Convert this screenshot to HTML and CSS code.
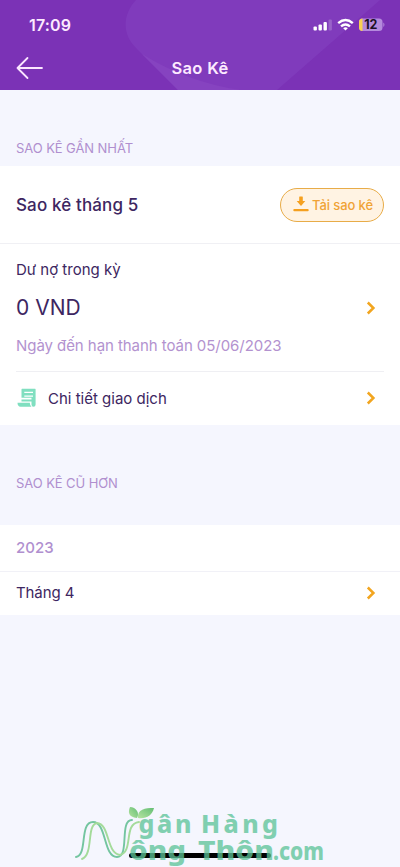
FILE: index.html
```html
<!DOCTYPE html>
<html lang="vi">
<head>
<meta charset="utf-8">
<meta name="viewport" content="width=device-width, initial-scale=1">
<title>Sao Kê</title>
<link rel="stylesheet" href="styles.css">
</head>
<body>
<header class="header">
  <svg class="header-art" width="400" height="90" viewBox="0 0 400 90" aria-hidden="true">
    <path d="M136 0C123 14 121 34 137 49L178 90H277L380 0Z" fill="#803bbc"/>
    <path d="M142 54Q187 82 240 90H178Z" fill="#8643c0"/>
  </svg>
  <div class="status">
    <span class="clock">17:09</span>
    <svg class="status-icons" width="74" height="18" viewBox="0 0 74 18" aria-label="12%">
      <g fill="#fff"><rect x="2.500" y="11.500" width="3.400" height="4" rx="1"/><rect x="7.500" y="9.500" width="3.400" height="6" rx="1"/><rect x="12.500" y="7" width="3.400" height="8.500" rx="1"/><rect x="17.500" y="4.500" width="3.400" height="11" rx="1" opacity=".2"/></g>
      <g fill="none" stroke="#fff" stroke-width="2.400"><path d="M27.200 8.200Q34.500 1.900 41.800 8.200"/><path d="M30 11.300Q34.500 7.500 39 11.300"/></g>
      <path d="M32.200 13.200Q34.500 11.500 36.800 13.200L34.500 15.500Z" fill="#fff"/>
      <rect x="48" y="3.500" width="23.500" height="12.500" rx="3.500" fill="#b48add"/>
      <path d="M51.500 3.500V16C49.200 16 48 14.500 48 12.500V7C48 5 49.200 3.500 51.500 3.500Z" fill="#f8d153"/>
      <path d="M72.300 7.500Q74.600 9.700 72.300 12Z" fill="#b48add"/>
      <text class="battery-text" x="59.800" y="14.200" text-anchor="middle">12</text>
    </svg>
  </div>
  <div class="titlebar">
    <svg class="back" width="28" height="24" viewBox="0 0 28 24" fill="none" stroke="#fbe6ff" stroke-width="1.800" stroke-linecap="round" stroke-linejoin="round"><path d="M26 12H1.500M11.500 2L1.500 12L11.500 22"/></svg>
    <h1 class="title">Sao Kê</h1>
  </div>
</header>
<main>
  <h2 class="section-label first">SAO KÊ GẦN NHẤT</h2>
  <section class="card">
    <div class="latest">
      <span class="month">Sao kê tháng 5</span>
      <button class="download" type="button">
        <svg width="16" height="17" viewBox="0 0 16 17" fill="#f5a01f"><path d="M6.200 1Q6.200 .5 6.700 .5H9.300Q9.800 .5 9.800 1V5H12.300L8 10L3.700 5H6.200Z"/><rect x=".3" y="13" width="15.400" height="2.300" rx="1"/></svg>
        <span>Tải sao kê</span>
      </button>
    </div>
    <div class="balance">
      <p class="balance-label">Dư nợ trong kỳ</p>
      <div class="amount-row">
        <span class="amount">0 VND</span>
        <svg class="chevron" width="10" height="14" viewBox="0 0 10 14"><path d="M1.800 1.500L7.400 7L1.800 12.500"/></svg>
      </div>
      <p class="due">Ngày đến hạn thanh toán 05/06/2023</p>
    </div>
    <div class="details">
      <svg class="receipt" width="20" height="20" viewBox="0 0 20 20" fill="#80dfc0"><path fill-rule="evenodd" d="M5.500 1.200Q5.500 .8 6 .8H19.200Q19.600 .8 19.600 1.200V16.500Q19.600 18.800 17.500 18.800Q15.500 18.800 15.500 16.500V13.500H5.500V11.500H15.500V9.800H5.500ZM8.300 3.700V4.900H17V3.700ZM8.300 7.600V8.800H17V7.600Z"/><path d="M1.500 14.800H13.800Q13.800 17.500 15.500 18.800H4.500Q1.500 18.500 1.500 14.800Z"/></svg>
      <span class="details-label">Chi tiết giao dịch</span>
      <svg class="chevron" width="10" height="14" viewBox="0 0 10 14"><path d="M1.800 1.500L7.400 7L1.800 12.500"/></svg>
    </div>
  </section>
  <h2 class="section-label older">SAO KÊ CŨ HƠN</h2>
  <section class="card">
    <div class="year">2023</div>
    <div class="old-row">
      <span class="old-month">Tháng 4</span>
      <svg class="chevron" width="10" height="14" viewBox="0 0 10 14"><path d="M1.800 1.500L7.400 7L1.800 12.500"/></svg>
    </div>
  </section>
</main>
<div class="home-bar"></div>
<svg class="watermark" width="260" height="67" viewBox="70 800 260 67">
  <defs><linearGradient id="leaf" x1="0" y1="1" x2="1" y2="0"><stop stop-color="#b5e3a0"/><stop offset="1" stop-color="#64be74"/></linearGradient></defs>
  <g fill="none" stroke-width="1.900" stroke-linecap="round">
    <path stroke="#74c5a0" d="M76 857C88 855 79 822 93 822C107 822 103 857 117 857C130 857 119 820 132 820"/>
    <path stroke="#a4db9a" d="M82 859C94 854 86 825 97 823C110 824 106 853 120 855C134 851 123 824 139 822"/>
  </g>
  <path d="M137 818C128 817 128 812 130 807C136 807 140 813 137 818Z" fill="url(#leaf)"/>
  <path d="M138 818C137 809 145 808 154 808C152 816 146 819 138 818Z" fill="url(#leaf)"/>
  <g class="wm-text">
    <text x="138.500" y="833" font-size="25" textLength="53" lengthAdjust="spacing">gân</text>
    <text x="201" y="833" font-size="25" textLength="77" lengthAdjust="spacing">Hàng</text>
    <text x="129" y="859.500" font-size="27" textLength="57" lengthAdjust="spacingAndGlyphs">ông</text>
    <text x="198" y="859.500" font-size="27" textLength="76" lengthAdjust="spacingAndGlyphs">Thôn</text>
    <text x="273" y="859.500" font-size="25" textLength="51" lengthAdjust="spacingAndGlyphs">.com</text>
  </g>
</svg>
</body>
</html>
```
FILE: styles.css
```css
* { box-sizing: border-box; }
body {
  margin: 0;
  height: 867px;
  overflow: hidden;
  position: relative;
  background: #f5f6fe;
  color: #3d2661;
  font-family: Inter, "Noto Sans", sans-serif;
}
h1, h2, p { margin: 0; }
svg { display: block; flex: none; }
.header { height: 90px; background: #7b32b6; position: relative; }
.header-art { position: absolute; inset: 0; }
.status {
  position: relative;
  height: 48px;
  padding: 1px 15px 0 29px;
  display: flex;
  align-items: center;
  justify-content: space-between;
}
.clock { color: #fdeaff; font-size: 16px; font-weight: 600; letter-spacing: .15px; }
.status-icons { margin-top: -2px; }
.battery-text { font-size: 12.5px; font-weight: 700; fill: #1d1025; }
.titlebar {
  position: relative;
  height: 40px;
  display: grid;
  grid-template-columns: 28px 1fr 28px;
  align-items: center;
  padding: 0 16px;
}
.title { color: #fdeaff; font-size: 16.5px; font-weight: 600; letter-spacing: .3px; text-align: center; }
.section-label {
  padding-left: 16px;
  color: #b08fcf;
  font-size: 13px;
  font-weight: 400;
  line-height: 18px;
  letter-spacing: -.08px;
}
.first { height: 76px; padding-top: 49px; }
.older { height: 100px; padding-top: 49px; }
.card { background: #fff; }
.latest {
  height: 78px;
  padding: 0 16px;
  display: flex;
  align-items: center;
  justify-content: space-between;
  border-bottom: 1px solid #f0f0f4;
}
.month { font-size: 17px; font-weight: 500; letter-spacing: .13px; }
.download {
  width: 104px;
  height: 34px;
  padding: 0 0 0 12px;
  display: flex;
  align-items: center;
  gap: 3px;
  border: 1.5px solid #e8ac48;
  border-radius: 17px;
  background: #fff3e3;
  color: #f0a336;
  font: 500 13px Inter, "Noto Sans", sans-serif;
  letter-spacing: -.1px;
  white-space: nowrap;
}
.balance { margin: 0 16px; height: 128px; padding-top: 16px; border-bottom: 1px solid #efeff3; }
.balance-label { font-size: 15px; line-height: 20px; }
.amount-row { height: 34px; margin-top: 11px; display: flex; align-items: center; justify-content: space-between; }
.amount { font-size: 21px; line-height: 24px; }
.amount-row .chevron, .details .chevron, .old-row .chevron { margin: 0 8px 0 auto; }
.chevron { fill: none; stroke: #f2a51f; stroke-width: 2.5; }
.due { margin-top: 11px; color: #b392cf; font-size: 15px; line-height: 20px; letter-spacing: -.06px; }
.details { height: 53px; padding: 0 16px 1px; display: flex; align-items: center; }
.details-label { margin-left: 12px; font-size: 15px; }
.year {
  height: 47px;
  padding: 0 16px;
  line-height: 46px;
  color: #b08fcf;
  font-size: 15px;
  font-weight: 500;
  border-bottom: 1px solid #f1f1f7;
}
.old-row { height: 43px; padding: 0 16px 1px; display: flex; align-items: center; }
.old-month { font-size: 15px; letter-spacing: -.1px; margin-top: -1px; }
.home-bar { position: absolute; left: 129px; top: 853px; width: 142px; height: 5px; border-radius: 3px; background: #000; }
.watermark { position: absolute; left: 70px; top: 800px; overflow: visible; }
.wm-text { font-family: "Noto Sans", sans-serif; font-weight: 800; fill: #5cc398; opacity: .76; }
```
